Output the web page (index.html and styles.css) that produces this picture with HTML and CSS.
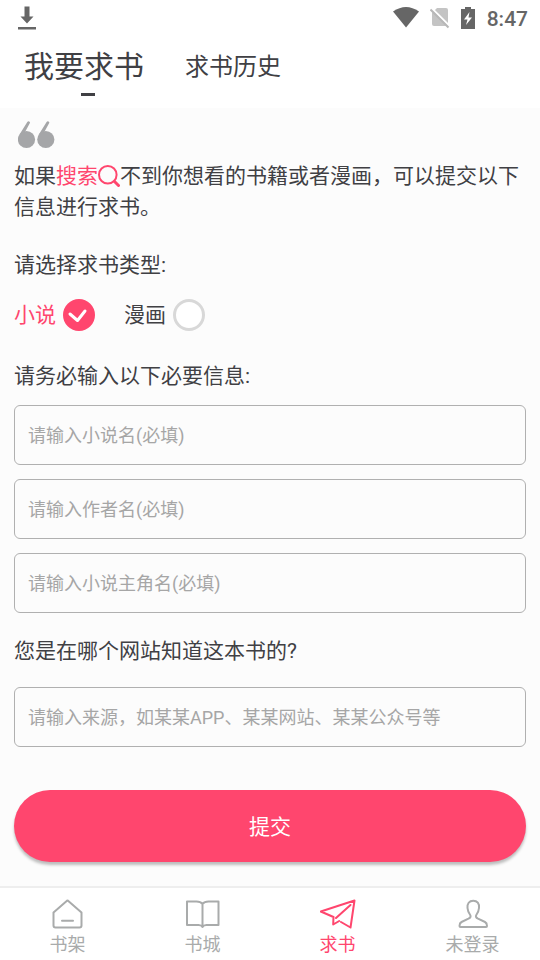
FILE: index.html
```html
<!DOCTYPE html>
<html lang="zh-CN">
<head>
<meta charset="utf-8">
<meta name="viewport" content="width=device-width, initial-scale=1">
<title>我要求书</title>
<link rel="stylesheet" href="styles.css">
</head>
<body>
<div class="app">
  <header class="top">
    <div class="status">
      <svg class="status-download" width="18" height="24" viewBox="0 0 18 24" fill="#666"><path d="M6.500.5h5v10h4l-6.500 7-6.500-7h4zM0 21h18v2.500H0z"/></svg>
      <div class="status-right">
        <svg width="26" height="22" viewBox="0 0 26 22" fill="#666"><path d="M0 4.500Q13-4.500 26 4.500L13 20.500z"/></svg>
        <svg width="20" height="22" viewBox="0 0 20 22"><path d="M7 1h9a2 2 0 0 1 2 2v16H4a2 2 0 0 1-2-2V6z" fill="#c4c4c4"/><path d="M1.500 1L20 19.500" stroke="#fff" stroke-width="2"/><path d="M.5 2.500L18.500 20.500" stroke="#b8b8b8" stroke-width="2"/></svg>
        <svg width="14" height="22" viewBox="0 0 14 22"><path d="M4 0h6v2h4v20H0V2h4z" fill="#666"/><path d="M8.500 5L3 12.500h3.500L5 18l6-7.500H7.500z" fill="#fff"/></svg>
        <span class="clock">8:47</span>
      </div>
    </div>
    <div class="tabs" role="tablist">
      <button class="tab tab-active" type="button" role="tab" aria-selected="true">我要求书</button>
      <button class="tab" type="button" role="tab" aria-selected="false">求书历史</button>
    </div>
  </header>

  <main class="content">
    <svg class="quote" width="38" height="28" viewBox="0 0 38 28" fill="#a5a6a8"><circle cx="8.500" cy="18.500" r="8.600"/><circle cx="27.800" cy="18.500" r="8.600"/><path d="M1.200 14L9.300.9q.8-1 1.900-.5t.7 1.700L6.500 12zM20.500 14L28.600.9q.8-1 1.900-.5t.7 1.700L25.800 12z"/></svg>
    <p class="intro">如果<a class="search" href="#search">搜索<svg class="search-icon" width="22" height="22" viewBox="0 0 22 22" fill="none" stroke="#ff466e"><circle cx="9.800" cy="9.800" r="8.800" stroke-width="2"/><path d="M16.500 16.500l4 4" stroke-width="3" stroke-linecap="round"/></svg></a>不到你想看的书籍或者漫画，可以提交以下信息进行求书。</p>

    <form class="form">
      <fieldset class="types">
        <legend class="heading">请选择求书类型:</legend>
        <div class="choices">
          <label class="choice">小说
            <span class="radio-wrap"><input class="radio" type="radio" name="type" checked><svg class="tick" viewBox="0 0 32 32" fill="none" stroke="#fff" stroke-width="3" stroke-linecap="round" stroke-linejoin="round"><path d="M7 15l7.500 6.500L22 12"/></svg></span>
          </label>
          <label class="choice">漫画
            <span class="radio-wrap"><input class="radio" type="radio" name="type"><svg class="tick" viewBox="0 0 32 32" fill="none" stroke="#fff" stroke-width="3" stroke-linecap="round" stroke-linejoin="round"><path d="M7 15l7.500 6.500L22 12"/></svg></span>
          </label>
        </div>
      </fieldset>

      <h2 class="heading">请务必输入以下必要信息:</h2>
      <div class="fields">
        <input class="field" type="text" aria-label="小说名" placeholder="请输入小说名(必填)">
        <input class="field" type="text" aria-label="作者名" placeholder="请输入作者名(必填)">
        <input class="field" type="text" aria-label="小说主角名" placeholder="请输入小说主角名(必填)">
      </div>
      <label class="heading heading-source" for="source">您是在哪个网站知道这本书的?</label>
      <input class="field" id="source" type="text" placeholder="请输入来源，如某某APP、某某网站、某某公众号等">
      <button class="submit" type="submit">提交</button>
    </form>
  </main>

  <nav class="nav">
    <a class="nav-item" href="#shelf">
      <svg class="nav-icon" viewBox="0 0 36 32"><path d="M3.500 14.500L17 2.700q.5-.3 1 0L31.500 14.500V27.500q0 2-2 2H5.500q-2 0-2-2z"/><path d="M12 22.700h11"/></svg>
      书架
    </a>
    <a class="nav-item" href="#store">
      <svg class="nav-icon" viewBox="0 0 36 32"><path d="M17.500 6Q15.500 3.500 11.500 3.500H2v23.500h11.500q3 0 4 2 1-2 4-2h12V3.500H23.500q-4 0-6 2.500zV29"/></svg>
      书城
    </a>
    <a class="nav-item nav-active" href="#request" aria-current="page">
      <svg class="nav-icon" viewBox="0 0 36 32"><path d="M13.500 19L.8 13.500 34.500 2.500 30.500 29.500l-9.500-5.500M30.500 7L16 20M13.500 19l-.3 7.500 6-3.500"/></svg>
      求书
    </a>
    <a class="nav-item" href="#account">
      <svg class="nav-icon" viewBox="0 0 36 32"><path d="M18.200 2.700c-4 0-6.200 3-5.700 7.300.3 3.500 1.500 5.500 2.700 7 .9 1.400.3 2.700-1.700 3.700L6.500 24q-2 1-2 4 0 1 1 1h25.500q1 0 1-1 0-3-2-4l-7-3.300c-2-1-2.600-2.300-1.700-3.700 1.200-1.500 2.400-3.500 2.700-7 .5-4.300-1.700-7.300-5.800-7.300z"/></svg>
      未登录
    </a>
  </nav>
</div>
</body>
</html>
```
FILE: styles.css
```css
* {
  box-sizing: border-box;
}

body {
  margin: 0;
  background: #fcfcfc;
  color: #404044;
  font-family: Roboto, "Noto Sans CJK SC", sans-serif;
  font-size: 21px;
  line-height: 31px;
}

button,
input {
  font: inherit;
  color: inherit;
}

.app {
  display: flex;
  flex-direction: column;
  min-height: 100vh;
}

.top {
  background: #fff;
  padding-bottom: 12px;
}

.status {
  display: flex;
  justify-content: space-between;
  align-items: center;
  height: 36px;
  padding: 0 12px 0 18px;
}

.status-right {
  display: flex;
  align-items: center;
  gap: 11px;
}

.clock {
  padding: 2px 0 0 1px;
  color: #666;
  font-size: 21px;
  font-weight: 500;
}

.tabs {
  display: flex;
  height: 60px;
}

.tab {
  position: relative;
  padding: 2px 9px 0;
  border: 0;
  background: none;
  font-size: 24px;
}

.tab-active {
  padding: 0 32px 0 24px;
  font-size: 30px;
}

.tab-active::after {
  content: "";
  position: absolute;
  bottom: 0;
  left: 50%;
  width: 14px;
  height: 3px;
  margin-left: -7px;
  background: #404044;
}

.content {
  flex: 1;
  padding: 13px 14px 24px;
}

.quote {
  display: block;
  margin-left: 4px;
}

.intro {
  margin: 12px 0 27px;
}

.search {
  color: #ff466e;
  text-decoration: none;
}

.search-icon {
  vertical-align: -4px;
}

.types {
  margin: 0;
  padding: 0;
  border: 0;
}

.heading {
  display: block;
  margin: 0;
  padding: 0;
  font-size: 21px;
  font-weight: 400;
}

.choices {
  display: flex;
  gap: 29px;
  margin: 18px 0 30px;
}

.choice {
  display: flex;
  align-items: center;
  gap: 7px;
}

.choice:has(:checked) {
  color: #ff466e;
}

.radio-wrap {
  position: relative;
  display: flex;
}

.radio {
  appearance: none;
  width: 32px;
  height: 32px;
  margin: 0;
  border: 3px solid #d8d8d8;
  border-radius: 50%;
  background: #fff;
}

.radio:checked {
  border-color: #ff466e;
  background: #ff466e;
}

.tick {
  position: absolute;
  inset: 0;
  display: none;
  pointer-events: none;
}

.radio:checked + .tick {
  display: block;
}

.fields {
  display: grid;
  gap: 14px;
  margin: 13px 0 23px;
}

.field {
  display: block;
  width: 100%;
  height: 60px;
  padding: 0 13px;
  border: 1px solid #b0b0b0;
  border-radius: 6px;
  background: transparent;
  font-size: 18px;
}

.field::placeholder {
  color: #a6a6a6;
  opacity: 1;
}

.heading-source {
  margin-bottom: 20px;
}

.submit {
  display: block;
  width: 100%;
  height: 72px;
  margin-top: 43px;
  padding: 2px 0 0;
  border: 0;
  border-radius: 36px;
  background: #ff466e;
  box-shadow: 0 3px 3px rgba(0, 0, 0, 0.25);
  color: #fff;
}

.nav {
  display: flex;
  padding: 10px 0 0;
  border-top: 2px solid #eee;
  background: #fff;
}

.nav-item {
  display: flex;
  flex: 1;
  flex-direction: column;
  align-items: center;
  color: #a9abab;
  font-size: 18px;
  line-height: 30px;
  text-decoration: none;
}

.nav-active {
  color: #ff466e;
}

.nav-icon {
  width: 36px;
  height: 32px;
  fill: none;
  stroke: currentColor;
  stroke-width: 2;
  stroke-linecap: round;
  stroke-linejoin: round;
}
```
